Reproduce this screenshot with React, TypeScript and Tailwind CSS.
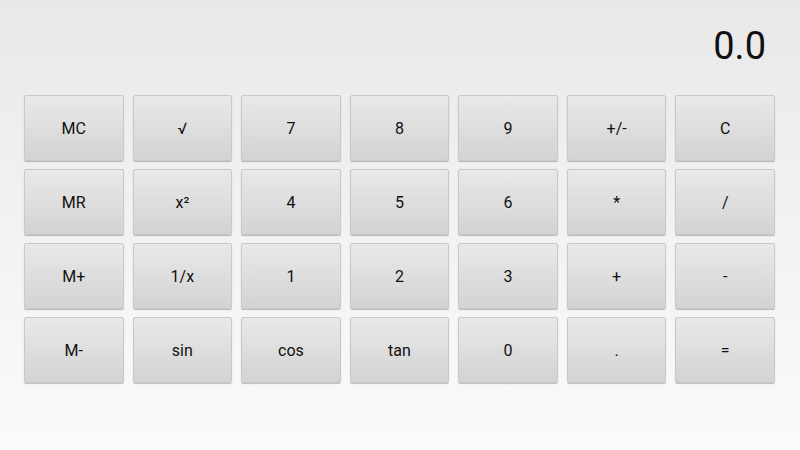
const keys = [
  ["MC", "√", "7", "8", "9", "+/-", "C"],
  ["MR", "x²", "4", "5", "6", "*", "/"],
  ["M+", "1/x", "1", "2", "3", "+", "-"],
  ["M-", "sin", "cos", "tan", "0", ".", "="],
];

function Key({ label }: { label: string }) {
  return (
    <button
      className="flex h-[66px] items-center justify-center rounded-[2px] border border-[#c9c9c9] bg-gradient-to-b from-[#e9e9e9] to-[#d3d3d3] pt-[2px] text-[16px] text-[#111] shadow-[0_1px_1px_rgba(0,0,0,0.25)]"
      style={{ fontFamily: "Roboto, 'Liberation Sans', sans-serif" }}
    >
      {label}
    </button>
  );
}

export default function App() {
  return (
    <div
      className="flex h-[450px] w-[800px] flex-col bg-gradient-to-b from-[#e9e9e9] to-[#fbfbfb]"
      style={{ fontFamily: "Roboto, 'Liberation Sans', sans-serif" }}
    >
      <div className="flex h-[95px] items-start justify-end pr-[34px] pt-[23px]">
        <span className="text-[38px] leading-[46px] text-[#111]">0.0</span>
      </div>
      <div className="grid grid-cols-7 gap-x-[9px] gap-y-[8px] pl-[24px] pr-[25px]">
        {keys.flat().map((k, i) => (
          <Key key={i} label={k} />
        ))}
      </div>
    </div>
  );
}
